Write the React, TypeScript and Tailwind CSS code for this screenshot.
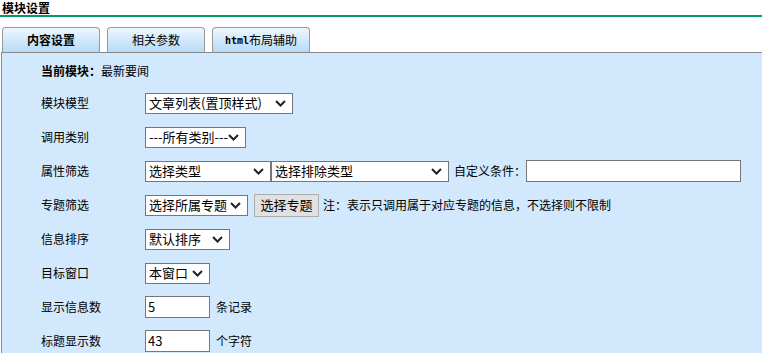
import { ReactNode } from "react";

const font = "font-['SimSun','Noto_Sans_CJK_SC',sans-serif]";

function Chevron() {
  return (
    <svg width="11" height="7" viewBox="0 0 11 7" className="shrink-0">
      <path d="M1 1 L5.5 5.5 L10 1" fill="none" stroke="#222" strokeWidth="2" />
    </svg>
  );
}

function FakeSelect({ text, width }: { text: string; width: string }) {
  return (
    <div
      className={`${width} h-[21px] bg-white border border-[#767676] flex items-center justify-between pl-[3px] pr-[6px] text-[13px] text-black`}
    >
      <span className="whitespace-nowrap">{text}</span>
      <Chevron />
    </div>
  );
}

function TextBox({ value, width }: { value?: string; width: string }) {
  return (
    <div
      className={`${width} h-[22px] bg-white border border-[#767676] flex items-center pl-[2px] text-[13px] text-black`}
    >
      {value}
    </div>
  );
}

function Row({ label, children }: { label: string; children: ReactNode }) {
  return (
    <div className="flex items-center h-[34px]">
      <div className="w-[104px] shrink-0">{label}</div>
      <div className="flex items-center">{children}</div>
    </div>
  );
}

function Tab({ children, bold }: { children: ReactNode; bold?: boolean }) {
  return (
    <div
      className={`w-[98px] h-[25px] flex items-center justify-center border border-b-0 border-[#9a9a9a] rounded-t-[4px] bg-gradient-to-b from-[#eef6fd] to-[#b6dbf7] text-[12px] text-black ${bold ? "font-bold" : ""}`}
    >
      {children}
    </div>
  );
}

export default function App() {
  return (
    <div className={`w-[762px] h-[353px] overflow-hidden bg-white text-[12px] text-black ${font}`}>
      {/* Title */}
      <div className="h-[15px] pl-[2px] leading-[15px] font-bold text-[12px]">模块设置</div>
      <div className="h-[2px] bg-[#009966]" />

      {/* Tabs */}
      <div className="flex gap-[7px] pl-[2px] pt-[10px]">
        <Tab bold>内容设置</Tab>
        <Tab>相关参数</Tab>
        <Tab>
          <span className="font-['DejaVu_Sans_Mono',monospace] text-[10px] font-bold">html</span>布局辅助
        </Tab>
      </div>

      {/* Panel */}
      <div className="ml-px border-t border-l border-[#888] bg-[#d2e8fc] pl-[39px] pt-[3px] h-[400px]">
        <div className="flex items-center h-[30px]">
          <span className="font-bold">当前模块：</span>
          <span>最新要闻</span>
        </div>
        <Row label="模块模型">
          <FakeSelect text="文章列表(置顶样式)" width="w-[148px]" />
        </Row>
        <Row label="调用类别">
          <FakeSelect text="---所有类别---" width="w-[101px]" />
        </Row>
        <Row label="属性筛选">
          <FakeSelect text="选择类型" width="w-[126px]" />
          <FakeSelect text="选择排除类型" width="w-[178px]" />
          <span className="ml-[5px]">自定义条件：</span>
          <TextBox width="w-[215px]" />
        </Row>
        <Row label="专题筛选">
          <FakeSelect text="选择所属专题" width="w-[103px]" />
          <div className="ml-[6px] h-[23px] w-[65px] flex items-center justify-center bg-[#e1e1e1] border border-[#adadad] text-[13px]">
            选择专题
          </div>
          <span className="ml-[4px]">注：表示只调用属于对应专题的信息，不选择则不限制</span>
        </Row>
        <Row label="信息排序">
          <FakeSelect text="默认排序" width="w-[85px]" />
        </Row>
        <Row label="目标窗口">
          <FakeSelect text="本窗口" width="w-[65px]" />
        </Row>
        <Row label="显示信息数">
          <TextBox value="5" width="w-[65px]" />
          <span className="ml-[6px]">条记录</span>
        </Row>
        <Row label="标题显示数">
          <TextBox value="43" width="w-[65px]" />
          <span className="ml-[6px]">个字符</span>
        </Row>
      </div>
    </div>
  );
}
